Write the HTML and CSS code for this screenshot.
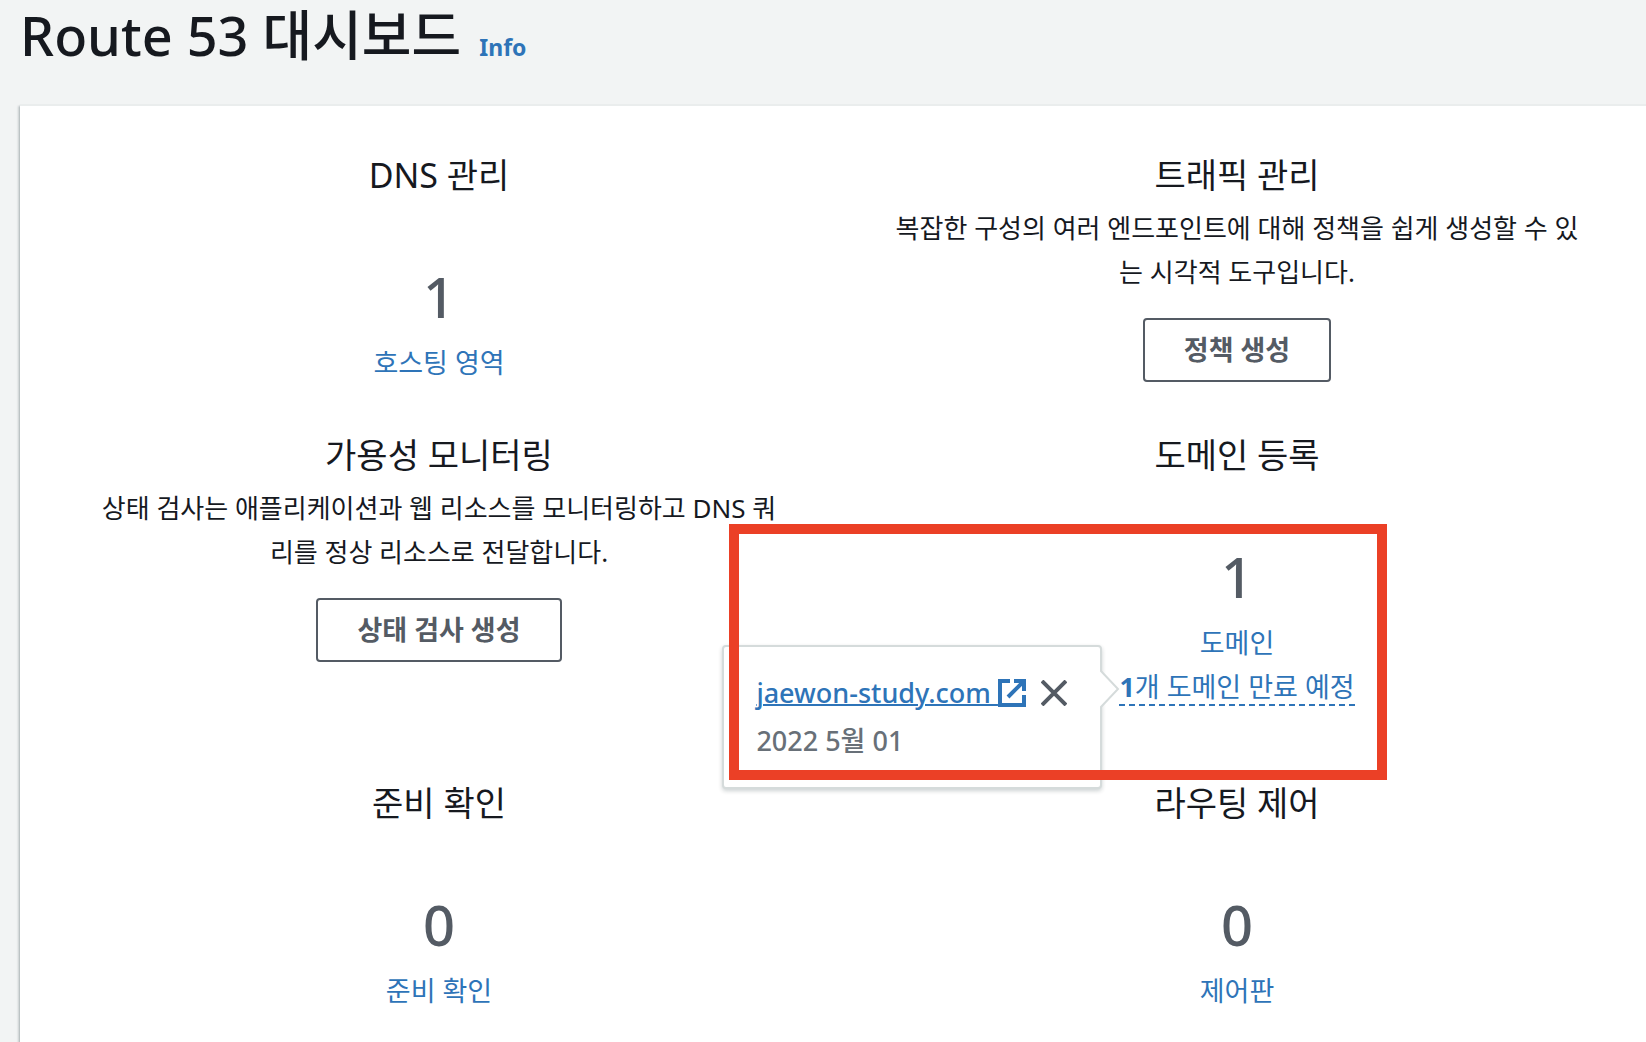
FILE: index.html
```html
<!DOCTYPE html>
<html lang="ko">

<head>
    <meta charset="UTF-8" />
    <meta name="viewport" content="width=device-width, initial-scale=1.0" />
    <title>Route 53 대시보드</title>
    <link rel="stylesheet" href="styles.css">
</head>

<body>
    <header class="page-header">
        <h1>Route 53 대시보드</h1>
        <a class="info" href="#">Info</a>
    </header>

    <main class="card">
        <section class="item">
            <h2>DNS 관리</h2>
            <p class="count">1</p>
            <a href="#">호스팅 영역</a>
        </section>

        <section class="item">
            <h2>트래픽 관리</h2>
            <p class="desc">복잡한 구성의 여러 엔드포인트에 대해 정책을 쉽게 생성할 수 있는 시각적 도구입니다.</p>
            <button class="btn" type="button">정책 생성</button>
        </section>

        <section class="item">
            <h2>가용성 모니터링</h2>
            <p class="desc">상태 검사는 애플리케이션과 웹 리소스를 모니터링하고 DNS 쿼리를 정상 리소스로 전달합니다.</p>
            <button class="btn" type="button">상태 검사 생성</button>
        </section>

        <section class="item">
            <h2>도메인 등록</h2>
            <p class="count">1</p>
            <a href="#">도메인</a>
            <div class="expiry">
                <button class="expiry-trigger" type="button"><b>1</b>개 도메인 만료 예정</button>
                <div class="popover">
                    <div class="popover-row">
                        <a class="domain" href="#"><span>jaewon-study.com&nbsp;</span><svg width="28" height="28" viewBox="0 0 28 28" fill="none" stroke="currentColor" stroke-width="4">
                                <path d="M12 2H2v24h24V16" />
                                <path d="M16 2h10v10M26 2L10 18" />
                            </svg></a>
                        <button class="close" type="button" aria-label="닫기">
                            <svg width="26" height="26" viewBox="0 0 26 26" fill="none" stroke="currentColor" stroke-width="4">
                                <path d="M1 1l24 24M25 1L1 25" />
                            </svg>
                        </button>
                    </div>
                    <p class="date">2022 5월 01</p>
                    <svg class="arrow" width="20" height="40" viewBox="0 0 20 40">
                        <path d="M0 1L18 20L0 39" fill="#fff" stroke="#d5dbdb" stroke-width="2" />
                    </svg>
                </div>
                <div class="highlight"></div>
            </div>
        </section>

        <section class="item">
            <h2>준비 확인</h2>
            <p class="count">0</p>
            <a href="#">준비 확인</a>
        </section>

        <section class="item">
            <h2>라우팅 제어</h2>
            <p class="count">0</p>
            <a href="#">제어판</a>
        </section>
    </main>
</body>

</html>
```
FILE: styles.css
```css
* {
    box-sizing: border-box;
}

body {
    display: flex;
    flex-direction: column;
    min-height: 100vh;
    margin: 0;
    background: #f2f4f4;
    color: #16191f;
    font-family: "Noto Sans", "Noto Sans CJK KR", sans-serif;
    font-size: 27px;
    line-height: 44px;
}

h1,
h2,
p {
    margin: 0;
    font-weight: 400;
}

a {
    color: #2e74b8;
    text-decoration: none;
}

button {
    font: inherit;
    cursor: pointer;
}

.page-header {
    display: flex;
    align-items: baseline;
    gap: 18px;
    height: 104px;
    padding-left: 20px;
}

h1 {
    font-size: 54px;
    font-weight: 500;
    line-height: 70px;
}

.info {
    font-size: 23px;
    font-weight: 700;
}

.card {
    flex: 1;
    display: grid;
    grid-template-columns: 1fr 1fr;
    align-content: start;
    gap: 49px 40px;
    margin-left: 20px;
    padding: 48px 30px 24px 40px;
    background: #fff;
    border-top: 2px solid #eaeded;
    box-shadow: 0 2px 2px rgba(0, 28, 36, 0.3), -2px 2px 2px rgba(0, 28, 36, 0.15);
}

.item {
    display: flex;
    flex-direction: column;
    align-items: center;
    text-align: center;
}

h2 {
    font-size: 34px;
    line-height: 42px;
}

.desc {
    margin: 10px 0 24px;
    padding: 0 30px;
    font-size: 26px;
}

.count {
    margin: 68px 0 13px;
    color: #545b64;
    font-size: 56px;
    font-weight: 500;
    line-height: 64px;
}

.btn {
    height: 64px;
    padding: 0 39px;
    background: #fff;
    border: 2px solid #545b64;
    border-radius: 4px;
    color: #545b64;
    font-weight: 700;
}

.expiry {
    position: relative;
    margin-bottom: 24px;
}

.expiry-trigger {
    display: block;
    height: 41px;
    margin-bottom: 3px;
    padding: 0;
    background: none;
    border: 0;
    border-bottom: 2px dashed #2e74b8;
    color: #2e74b8;
}

.popover {
    position: absolute;
    top: -20px;
    right: calc(100% + 17px);
    width: 380px;
    padding: 22px 32px;
    background: #fff;
    border: 2px solid #d5dbdb;
    border-radius: 4px;
    box-shadow: 0 2px 4px rgba(0, 28, 36, 0.2);
    font-weight: 500;
    line-height: 48px;
    text-align: left;
}

.popover-row {
    display: flex;
    align-items: center;
    gap: 15px;
}

.domain {
    display: flex;
    align-items: center;
}

.domain span {
    text-decoration: underline;
    text-decoration-thickness: 2px;
}

.close {
    display: flex;
    padding: 0;
    background: none;
    border: 0;
    color: #545b64;
}

.date {
    color: #687078;
    font-weight: 500;
}

.arrow {
    position: absolute;
    top: 22px;
    left: 100%;
}

/* red frame over the domain info */
.highlight {
    position: absolute;
    top: -141px;
    right: -32px;
    bottom: -71px;
    left: -390px;
    border: 10px solid #eb4026;
    pointer-events: none;
}
```
